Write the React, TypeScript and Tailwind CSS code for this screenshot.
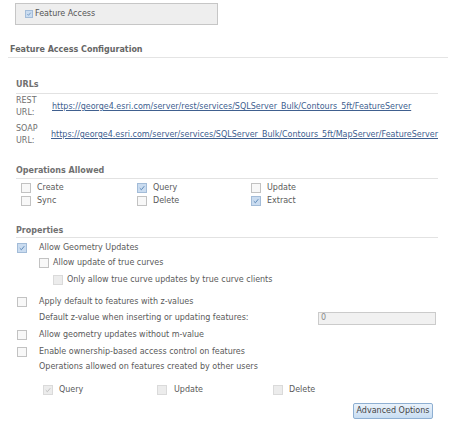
import type { ReactNode } from "react";

type BoxProps = { checked?: boolean; disabled?: boolean; size?: string };

function Box({ checked = false, disabled = false, size = "w-[10px] h-[10px]" }: BoxProps) {
  const tone = disabled
    ? "border-[#dadada] bg-[#ececec]"
    : checked
      ? "border-[#a3bcd8] bg-[#cadcf0]"
      : "border-[#c2c2c2] bg-[#f8f8f8]";
  return (
    <span className={`${size} shrink-0 border ${tone} flex items-center justify-center`}>
      {checked && (
        <svg viewBox="0 0 10 10" className="w-full h-full">
          <path
            d="M2.2 5.2 L4.2 7.2 L7.8 2.8"
            fill="none"
            stroke={disabled ? "#bdbdbd" : "#5a86b6"}
            strokeWidth="1.2"
          />
        </svg>
      )}
    </span>
  );
}

function SectionTitle({ children, className = "" }: { children: ReactNode; className?: string }) {
  return (
    <div className={`leading-[12px] font-bold text-[#707070] border-b border-[#e2e2e2] ${className}`}>
      {children}
    </div>
  );
}

function Op({ label, checked }: { label: string; checked?: boolean }) {
  return (
    <div className="flex items-center gap-[6px] pl-[5px] h-[13px]">
      <Box checked={checked} />
      <span>{label}</span>
    </div>
  );
}

function PropRow({ label, checked, className = "" }: { label: string; checked?: boolean; className?: string }) {
  return (
    <div className={`flex items-center h-[12px] ${className}`}>
      <span className="w-[23px] pl-[1px] flex">
        <Box checked={checked} />
      </span>
      <span>{label}</span>
    </div>
  );
}

export default function App() {
  return (
    <div className="w-[450px] h-[433px] bg-white overflow-hidden font-['DejaVu_Sans',sans-serif] text-[8px] text-[#5a5a5a]">
      {/* service capability toggle */}
      <div className="mt-[3px] ml-[15px] w-[203px] h-[22px] border border-[#c6c6c6] bg-[#eeeeee] flex items-center pl-[9px] gap-[2px]">
        <Box checked size="w-[8px] h-[8px]" />
        <span className="text-[#555]">Feature Access</span>
      </div>

      <div className="mt-[19px] ml-[8px] w-[440px] pl-[2px] pb-[1px] leading-[12px] font-bold text-[#666] border-b border-[#e4e4e4]">
        Feature Access Configuration
      </div>

      <div className="ml-[16px] w-[422px]">
        {/* URLs */}
        <SectionTitle className="mt-[21px] pb-[2px]">URLs</SectionTitle>
        <div className="mt-[1px] flex items-center">
          <div className="w-[36px] leading-[12px] text-[#707070]">
            <div>REST</div>
            <div>URL:</div>
          </div>
          <a className="text-[#40608f] underline whitespace-nowrap">
            https://george4.esri.com/server/rest/services/SQLServer_Bulk/Contours_5ft/FeatureServer
          </a>
        </div>
        <div className="mt-[4px] flex items-center">
          <div className="w-[36px] leading-[12px] text-[#707070]">
            <div>SOAP</div>
            <div>URL:</div>
          </div>
          <a className="text-[#40608f] underline whitespace-nowrap">
            https://george4.esri.com/server/services/SQLServer_Bulk/Contours_5ft/MapServer/FeatureServer
          </a>
        </div>

        {/* Operations */}
        <SectionTitle className="mt-[18px] pb-[1px]">Operations Allowed</SectionTitle>
        <div className="mt-[2px] grid grid-cols-[116px_114px_1fr]">
          <Op label="Create" />
          <Op label="Query" checked />
          <Op label="Update" />
          <Op label="Sync" />
          <Op label="Delete" />
          <Op label="Extract" checked />
        </div>

        {/* Properties */}
        <SectionTitle className="mt-[18px]">Properties</SectionTitle>
        <PropRow className="mt-[4px]" label="Allow Geometry Updates" checked />
        <div className="mt-[3px] h-[12px] flex items-center gap-[4px] pl-[23px]">
          <Box />
          <span>Allow update of true curves</span>
        </div>
        <div className="mt-[5px] h-[12px] flex items-center gap-[4px] pl-[37px]">
          <Box disabled />
          <span>Only allow true curve updates by true curve clients</span>
        </div>
        <PropRow className="mt-[10px]" label="Apply default to features with z-values" />
        <div className="mt-[3px] h-[14px] flex items-center pl-[23px] pr-[2px]">
          <span>Default z-value when inserting or updating features:</span>
          <div className="ml-auto w-[118px] h-[13px] border border-[#cbcbcb] bg-[#f1f1f1] flex items-center pl-[2px] text-[#8a8a8a]">
            0
          </div>
        </div>
        <PropRow className="mt-[4px]" label="Allow geometry updates without m-value" />
        <PropRow className="mt-[5px]" label="Enable ownership-based access control on features" />
        <div className="mt-[3px] h-[12px] leading-[12px] pl-[23px]">
          Operations allowed on features created by other users
        </div>
        <div className="mt-[11px] h-[12px] grid grid-cols-[114px_116px_1fr] pl-[27px]">
          <div className="flex items-center gap-[6px]">
            <Box checked disabled />
            <span>Query</span>
          </div>
          <div className="flex items-center gap-[7px]">
            <Box disabled />
            <span>Update</span>
          </div>
          <div className="flex items-center gap-[6px]">
            <Box disabled />
            <span>Delete</span>
          </div>
        </div>

        <div className="mt-[7px] flex justify-end pr-[5px]">
          <button className="w-[80px] h-[16px] rounded-[2px] border border-[#8eafd2] bg-gradient-to-b from-[#eaf2fb] to-[#c8ddf2] text-[8px] text-[#444] leading-none">
            Advanced Options
          </button>
        </div>
      </div>
    </div>
  );
}
